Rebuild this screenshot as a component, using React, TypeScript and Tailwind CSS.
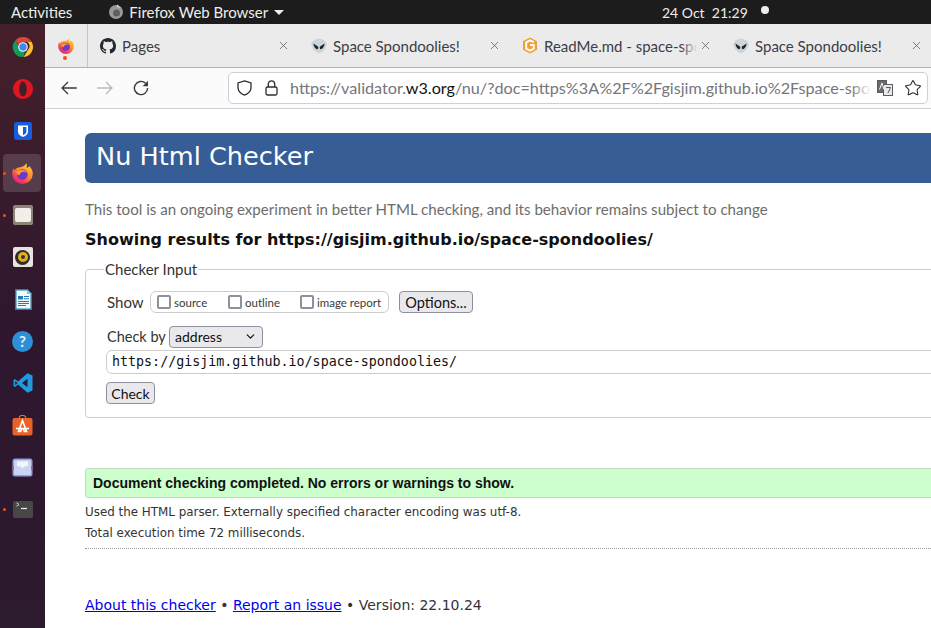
import { ChevronDown, Star, X } from "lucide-react";

const ui = "font-['Lato','Noto_Sans',sans-serif]";

function Chrome() {
  return (
    <svg width="22" height="22" viewBox="0 0 22 22">
      <path d="M11 1a10 10 0 0 1 8.700 5H11a5 5 0 0 0-4.600 3L3.300 4.400A10 10 0 0 1 11 1z" fill="#db4437" />
      <path d="M19.700 6A10 10 0 0 1 11.600 21l4-6.800A5 5 0 0 0 15.300 6z" fill="#fbc02d" />
      <path d="M11.600 21A10 10 0 0 1 3.300 4.400l4 6.900a5 5 0 0 0 5.600 4.300z" fill="#0f9d58" />
      <circle cx="11" cy="11" r="4.800" fill="#fff" />
      <circle cx="11" cy="11" r="3.700" fill="#4285f4" />
    </svg>
  );
}

function Opera() {
  return (
    <svg width="22" height="22" viewBox="0 0 22 22">
      <path fillRule="evenodd" d="M11 1c5.500 0 10 4.500 10 10s-4.500 10-10 10S1 16.500 1 11 5.500 1 11 1zm0 2.600c-2.200 0-3.700 3.300-3.700 7.400s1.500 7.400 3.700 7.400 3.700-3.300 3.700-7.400-1.500-7.400-3.700-7.400z" fill="#e0151f" />
    </svg>
  );
}

function Bitwarden() {
  return (
    <svg width="18" height="18" viewBox="0 0 18 18">
      <rect width="18" height="18" rx="2.500" fill="#175ddc" />
      <path d="M4 3.500h10v6c0 3-2.500 4.500-5 5.500-2.500-1-5-2.500-5-5.500z" fill="#fff" />
      <path d="M9 5v8.200c1.700-.8 3.400-2 3.400-3.700V5z" fill="#175ddc" />
    </svg>
  );
}

function Firefox({ size = 21 }: { size?: number }) {
  const id = `fx${size}`;
  return (
    <svg width={size} height={size} viewBox="0 0 20 20">
      <defs>
        <linearGradient id={id} x1="0.85" y1="0.05" x2="0.25" y2="1">
          <stop offset="0" stopColor="#ffd23a" />
          <stop offset="0.45" stopColor="#ff8a28" />
          <stop offset="0.8" stopColor="#f5365c" />
          <stop offset="1" stopColor="#d9249a" />
        </linearGradient>
      </defs>
      <path d="M13.600 .3c.9 1.500 .7 3.200 .2 4.200 1 .2 2-.5 2.600-1.400C18.600 5 19.800 7.500 19.800 10.200A9.800 9.800 0 0 1 .2 10.200C.2 8.200 .8 6.400 1.700 5c.1 .9 .4 1.600 .9 2C3.400 5.200 5 4.300 6.600 4.200 9.500 4 12.500 3 13.600 .3z" fill={`url(#${id})`} />
      <circle cx="9.900" cy="11" r="5" fill="#6e38c9" />
      <path d="M4.300 9.500c1-2.700 5.500-4 8.800-1.700 .6 .4 1.100 .9 1.500 1.500-2-1.200-4-1.300-5.500-.6-1.200 .6-2 1.600-1.800 3-1.400-.2-2.500-1-3-2.200z" fill="#ff9d32" />
    </svg>
  );
}

function Files() {
  return (
    <div className="flex h-[20px] w-[20px] items-center justify-center rounded-[2px] bg-[#8c8474]">
      <div className="h-[14px] w-[16px] rounded-[2px] bg-[#f2efe9]" />
    </div>
  );
}

function Rhythmbox() {
  return (
    <div className="flex h-[20px] w-[20px] items-center justify-center rounded-[2px] bg-[#e8e4dc]">
      <div className="flex h-[15px] w-[15px] items-center justify-center rounded-full bg-[#2f2c28]">
        <div className="flex h-[10px] w-[10px] items-center justify-center rounded-full bg-[#e0b020]">
          <div className="h-[4px] w-[4px] rounded-full bg-[#3a3428]" />
        </div>
      </div>
    </div>
  );
}

function Writer() {
  return (
    <svg width="18" height="21" viewBox="0 0 18 21">
      <path d="M1 0h12l5 5v16H1z" fill="#1c7fb6" />
      <path d="M2.500 1.500h10L16.500 5.500V19.500h-14z" fill="#f4f8fb" />
      <path d="M13 0v5h5z" fill="#7fbfe0" />
      <rect x="4" y="7" width="5" height="3.500" fill="#1c7fb6" />
      <path d="M10 7.500h5M10 9.800h5M4 12.500h11M4 14.500h11M4 16.500h8" stroke="#1c7fb6" strokeWidth="1" />
    </svg>
  );
}

function Help() {
  return (
    <div className={`${ui} flex h-[21px] w-[21px] items-center justify-center rounded-full bg-[#2c8fd8] text-[15px] font-bold text-[#e8f2fa]`}>?</div>
  );
}

function VsCode() {
  return (
    <svg width="20" height="20" viewBox="0 0 20 20">
      <path d="M14.500 .3 19.500 2.600v14.800l-5 2.300L5 11.500l-3 2.500-1.500-1V7l1.500-1 3 2.500z" fill="#1f9ae0" />
      <path d="M14.500 5.800 9 10l5.500 4.200z" fill="#2b1a2e" />
      <path d="M2.200 8 2.200 12 4.500 10z" fill="#2b1a2e" />
    </svg>
  );
}

function AppStore() {
  return (
    <svg width="21" height="21" viewBox="0 0 21 21">
      <path d="M7 3.500C7 1 8.500 .5 10.500 .5S14 1 14 3.500" fill="none" stroke="#c9a27a" strokeWidth="1" />
      <rect x="0.500" y="3" width="20" height="17.500" rx="2" fill="#e9622a" />
      <path d="M10.500 5.500 14.500 16.500h-2.200l-1-3H9.700l-1 3H6.500zM4 13.500h13" stroke="#fff" strokeWidth="1.600" fill="none" />
    </svg>
  );
}

function Mail() {
  return (
    <svg width="21" height="19" viewBox="0 0 21 19">
      <rect x="0.500" y="0.500" width="20" height="18" rx="2.500" fill="#8aa3e0" />
      <rect x="2" y="2" width="17" height="15" rx="1.500" fill="#c8d4f2" />
      <path d="M5 3.500h11v4.500l-3.500 .5-2 2-2-2L5 8z" fill="#f2f5fc" />
      <rect x="0.500" y="8" width="1.500" height="4" fill="#d8506a" />
      <rect x="19" y="8" width="1.500" height="4" fill="#d8506a" />
    </svg>
  );
}

function Terminal() {
  return (
    <div className="h-[17px] w-[20px] rounded-[2px] bg-[#47474a] pl-[3px] pt-[1px]">
      <svg width="12" height="8" viewBox="0 0 12 8">
        <path d="M.5 .8 3 2.500.5 4.200" fill="none" stroke="#e0e0e0" strokeWidth="0.900" />
        <path d="M5 6.500h6" stroke="#f2f2f2" strokeWidth="1.200" />
      </svg>
    </div>
  );
}

function GitHubMark() {
  return (
    <svg width="16" height="16" viewBox="0 0 16 16" fill="#24292f">
      <path d="M8 0C3.580 0 0 3.580 0 8c0 3.540 2.290 6.530 5.470 7.590.4.070.55-.17.55-.38 0-.19-.01-.82-.01-1.490-2.010.37-2.530-.49-2.690-.94-.09-.23-.48-.94-.82-1.130-.28-.15-.68-.52-.01-.53.63-.01 1.080.58 1.230.82.72 1.210 1.870.87 2.330.66.070-.52.28-.87.51-1.070-1.780-.2-3.640-.89-3.640-3.950 0-.87.31-1.590.82-2.150-.08-.2-.36-1.020.08-2.120 0 0 .67-.21 2.200.82.640-.18 1.320-.27 2-.27s1.360.09 2 .27c1.530-1.040 2.200-.82 2.200-.82.440 1.100.160 1.920.080 2.120.510.560.820 1.270.820 2.150 0 3.070-1.870 3.750-3.650 3.950.290.250.540.730.540 1.480 0 1.070-.010 1.930-.010 2.200 0 .210.150.460.550.380A8.010 8.010 0 0 0 16 8c0-4.420-3.580-8-8-8z" />
    </svg>
  );
}

function Alien() {
  return (
    <svg width="16" height="16" viewBox="0 0 16 16">
      <path d="M8 .8c4.200 0 7.600 2.400 7.600 5.800 0 3.600-4.600 8.600-7.600 8.600S.4 10.200 .4 6.600C.4 3.200 3.800 .8 8 .8z" fill="#ccd5da" />
      <path d="M2.400 5.600 7.200 8.800c.2 1.700-.3 2.700-1.300 2.500C4.200 11 2.700 8.500 2.400 5.600zM13.600 5.600 8.800 8.800c-.2 1.700 .3 2.700 1.300 2.500 1.700-.3 3.200-2.800 3.500-5.700z" fill="#1d2427" />
    </svg>
  );
}

function Gitiles() {
  return (
    <svg width="16" height="17" viewBox="0 0 16 17">
      <path d="M8 .5 15 4.200v8.600L8 16.500 1 12.800V4.200z" fill="#f0a030" />
      <path d="M11.800 5.200 8 3.300 4.200 5.300v6.400L8 13.700l3.800-2V8H8" fill="none" stroke="#fff" strokeWidth="2" />
    </svg>
  );
}

function Translate() {
  return (
    <svg width="16" height="16" viewBox="0 0 16 16">
      <rect x="0.500" y="0.500" width="9" height="12" fill="#6a6a6a" stroke="#5b5b66" />
      <rect x="6.500" y="4.500" width="9" height="11" fill="#e8e8ea" stroke="#5b5b66" />
      <path d="M2.500 9.500 5 3l2 6.500" fill="none" stroke="#fff" strokeWidth="1" />
      <path d="M9 7.500h4.500L11 13" fill="none" stroke="#5b5b66" strokeWidth="1" />
    </svg>
  );
}

function BackIcon({ className }: { className?: string }) {
  return (
    <svg width="16" height="14" viewBox="0 0 16 14" fill="none" stroke="currentColor" strokeWidth="1.300" className={className}>
      <path d="M.8 7h15M7 1 1 7l6 6" />
    </svg>
  );
}

function ReloadIcon() {
  return (
    <svg width="16" height="16" viewBox="0 0 16 16" fill="none" className="text-[#3a3a42]">
      <path d="M12.600 3.300A6.600 6.600 0 1 0 14.600 8" stroke="currentColor" strokeWidth="1.400" />
      <path d="M15 .8V6.200H9.600z" fill="currentColor" />
    </svg>
  );
}

function ShieldIcon() {
  return (
    <svg width="15" height="16" viewBox="0 0 15 16" fill="none" stroke="#2b2b33" strokeWidth="1.300" className="shrink-0">
      <path d="M7.500 .9 14 3v4.500c0 3.700-3 6.300-6.500 7.600C4 13.800 1 11.200 1 7.500V3z" />
    </svg>
  );
}

function LockIcon() {
  return (
    <svg width="13" height="16" viewBox="0 0 13 16" fill="none" stroke="#2b2b33" strokeWidth="1.300" className="shrink-0">
      <rect x="1" y="7" width="11" height="8" rx="1.500" />
      <path d="M3.300 7V4a3.200 3.200 0 0 1 6.400 0v3" />
    </svg>
  );
}

const dock = [
  { icon: <Chrome /> },
  { icon: <Opera /> },
  { icon: <Bitwarden /> },
  { icon: <Firefox />, active: true, running: true },
  { icon: <Files />, running: true },
  { icon: <Rhythmbox /> },
  { icon: <Writer /> },
  { icon: <Help /> },
  { icon: <VsCode /> },
  { icon: <AppStore /> },
  { icon: <Mail /> },
  { icon: <Terminal />, running: true },
];

function Dock() {
  return (
    <div className="flex w-[45px] shrink-0 flex-col bg-gradient-to-b from-[#45202a] via-[#2e172e] to-[#2c1a2e] pt-[2px]">
      {dock.map((item, i) => (
        <div key={i} className="relative flex h-[42px] items-center justify-center">
          {item.active && <div className="absolute left-[3px] top-[2px] h-[38px] w-[38px] rounded-[4px] bg-white/15" />}
          {item.running && <div className="absolute left-[3px] top-[19.500px] h-[3px] w-[3px] rounded-full bg-[#e95420]" />}
          <div className="relative">{item.icon}</div>
        </div>
      ))}
    </div>
  );
}

const tabs = [
  { title: "Pages", icon: <GitHubMark /> },
  { title: "Space Spondoolies!", icon: <Alien /> },
  { title: "ReadMe.md - space-spondoolies", icon: <Gitiles />, fade: true },
  { title: "Space Spondoolies!", icon: <Alien /> },
];

function TabStrip() {
  return (
    <div className={`${ui} flex h-[44px] shrink-0 border-b border-[#b1b1b1] bg-[#ebebeb] text-[15px] text-[#3d3d45]`}>
      <div className="relative flex w-[43px] shrink-0 items-center justify-center border-r border-[#c4c4c4] pr-[1px]">
        <Firefox size={16} />
        <div className="absolute bottom-[7px] left-[18px] h-[4px] w-[4px] rounded-full bg-[#e95420]" />
      </div>
      {tabs.map((t, i) => (
        <div key={i} className="flex w-[211px] shrink-0 items-center pl-[12px] pr-[9px]">
          <div className="w-[22px] shrink-0">{t.icon}</div>
          <div className="relative min-w-0 flex-1 overflow-hidden whitespace-nowrap pt-[2px]">
            {t.title}
            {t.fade && <div className="absolute inset-y-0 right-0 w-[16px] bg-gradient-to-r from-transparent to-[#ebebeb]" />}
          </div>
          <X size={13} strokeWidth={1.300} className="ml-[2px] shrink-0 text-[#505058]" />
        </div>
      ))}
    </div>
  );
}

function Toolbar() {
  return (
    <div className="flex h-[41px] shrink-0 items-center border-b border-[#cfcfd8] bg-[#fbfbfc]">
      <div className="flex w-[183px] shrink-0 items-center pl-[16px] text-[#3a3a42]">
        <BackIcon />
        <BackIcon className="ml-[20px] rotate-180 text-[#b8b8bd]" />
        <div className="ml-[20px]">
          <ReloadIcon />
        </div>
      </div>
      <div className={`${ui} flex h-[32px] w-[700px] shrink-0 items-center rounded-[5px] border border-[#cfcfd8] bg-white pl-[8px] text-[#45454d]`}>
        <ShieldIcon />
        <div className="ml-[13px]">
          <LockIcon />
        </div>
        <div className="relative ml-[12px] min-w-0 flex-1 overflow-hidden whitespace-nowrap text-[16.200px] text-[#75757b]">
          https://validator.<span className="text-[#111]">w3.org</span>/nu/?doc=https%3A%2F%2Fgisjim.github.io%2Fspace-spondoolies%2F
          <div className="absolute inset-y-0 right-0 w-[20px] bg-gradient-to-r from-transparent to-white" />
        </div>
        <div className="ml-[6px] shrink-0">
          <Translate />
        </div>
        <Star size={18} strokeWidth={1.400} className="ml-[11px] mr-[5px] shrink-0 text-[#2b2b33]" />
      </div>
    </div>
  );
}

function Check({ label, className }: { label: string; className: string }) {
  return (
    <label className={`flex items-center ${className}`}>
      <input type="checkbox" className="h-[14px] w-[14px] appearance-none rounded-[2px] border-2 border-[#8f8f9d] bg-white" />
      <span className="ml-[3px] text-[11.500px] text-[#3a3a3a]">{label}</span>
    </label>
  );
}

function Page() {
  return (
    <div className="min-w-0 flex-1 overflow-hidden bg-white pl-[40px] pt-[24px]">
      <div className="w-[1000px]">
        <h1 className="h-[50px] rounded-[6px] bg-[#365d95] pl-[11px] font-['DejaVu_Sans',sans-serif] text-[25.600px] leading-[47px] text-white">
          Nu Html Checker
        </h1>
        <p className={`${ui} mt-[17px] text-[15.100px] leading-[18px] text-[#6d6d6d]`}>
          This tool is an ongoing experiment in better HTML checking, and its behavior remains subject to change
        </p>
        <h2 className="mt-[11px] font-['DejaVu_Sans',sans-serif] text-[16px] font-bold leading-[22px] text-[#111]">
          Showing results for https://gisjim.github.io/space-spondoolies/
        </h2>

        <fieldset className={`${ui} mt-[9px] h-[158px] rounded-[4px] border border-[#cccccc] pl-[20px] text-[15px] text-[#333]`}>
          <legend className="-ml-[2px] px-[1px] leading-[18px]">Checker Input</legend>
          <div className="mt-[13px] flex items-center">
            <span className="w-[44px] pl-px">Show</span>
            <div className="flex h-[22px] w-[239px] items-center rounded-[6px] border border-[#cccccc] pl-[6px]">
              <Check label="source" className="w-[71px]" />
              <Check label="outline" className="w-[72px]" />
              <Check label="image report" className="" />
            </div>
            <button className="ml-[10px] h-[22px] w-[74px] rounded-[4px] border border-[#8f8f9d] bg-[#e9e9ed] text-[14.500px] text-[#111]">
              Options...
            </button>
          </div>
          <div className="mt-[12px] flex items-center">
            <span className="w-[63px] pl-px text-[14.500px]">Check by</span>
            <div className="flex h-[22px] w-[94px] items-center justify-between rounded-[4px] border border-[#8f8f9d] bg-[#e9e9ed] px-[5px] text-[14px] text-[#111]">
              address
              <ChevronDown size={13} strokeWidth={2.200} />
            </div>
          </div>
          <input
            readOnly
            value="https://gisjim.github.io/space-spondoolies/"
            className="mt-[2px] block h-[24px] w-full rounded-[6px] border border-[#cccccc] pl-[5px] font-['DejaVu_Sans_Mono',monospace] text-[13.333px] text-[#111]"
          />
          <button className="mt-[8px] block h-[22px] w-[49px] rounded-[4px] border border-[#8f8f9d] bg-[#e9e9ed] pb-px text-[14px] text-[#111]">
            Check
          </button>
        </fieldset>

        <div className="mt-[50px] h-[30px] rounded-[3px] border border-[#c4d8c4] bg-[#ccffcc] pl-[7px] font-['Liberation_Sans',sans-serif] text-[14px] font-bold leading-[28px] text-[#111]">
          Document checking completed. No errors or warnings to show.
        </div>
        <div className="border-b border-dotted border-[#999999] py-[4px] font-['DejaVu_Sans',sans-serif] text-[11.900px] leading-[21px] text-[#333]">
          <p>Used the HTML parser. Externally specified character encoding was utf-8.</p>
          <p>Total execution time 72 milliseconds.</p>
        </div>
        <p className="mt-[46px] font-['DejaVu_Sans',sans-serif] text-[14px] leading-[20px] text-[#333]">
          <a className="text-[#0000ee] underline">About this checker</a> • <a className="text-[#0000ee] underline">Report an issue</a> • Version: 22.10.24
        </p>
      </div>
    </div>
  );
}

export default function App() {
  return (
    <div className="flex h-[628px] w-[931px] flex-col overflow-hidden">
      <div className={`${ui} relative flex h-[24px] shrink-0 items-center bg-[#1c1c1c] text-[15px] text-[#eeeeec]`}>
        <span className="ml-[11px]">Activities</span>
        <svg width="16" height="16" viewBox="0 0 16 16" className="ml-[36px]">
          <circle cx="8" cy="8" r="7" fill="#9a9a9a" />
          <circle cx="8.500" cy="9" r="3.500" fill="#5f5f5f" />
          <path d="M9 0c1 2 3 3 4 4L9 3z" fill="#d8d8d8" />
        </svg>
        <span className="ml-[5px]">Firefox Web Browser</span>
        <span className="ml-[6px] h-0 w-0 border-x-[5px] border-t-[5px] border-x-transparent border-t-[#eeeeec]" />
        <span className="absolute left-[662px] text-[14px]">24 Oct&nbsp;&nbsp;21:29</span>
        <span className="absolute left-[761px] top-[6px] h-[8px] w-[8px] rounded-full bg-[#eeeeec]" />
      </div>
      <div className="flex min-h-0 flex-1">
        <Dock />
        <div className="flex min-w-0 flex-1 flex-col">
          <TabStrip />
          <Toolbar />
          <Page />
        </div>
      </div>
    </div>
  );
}
